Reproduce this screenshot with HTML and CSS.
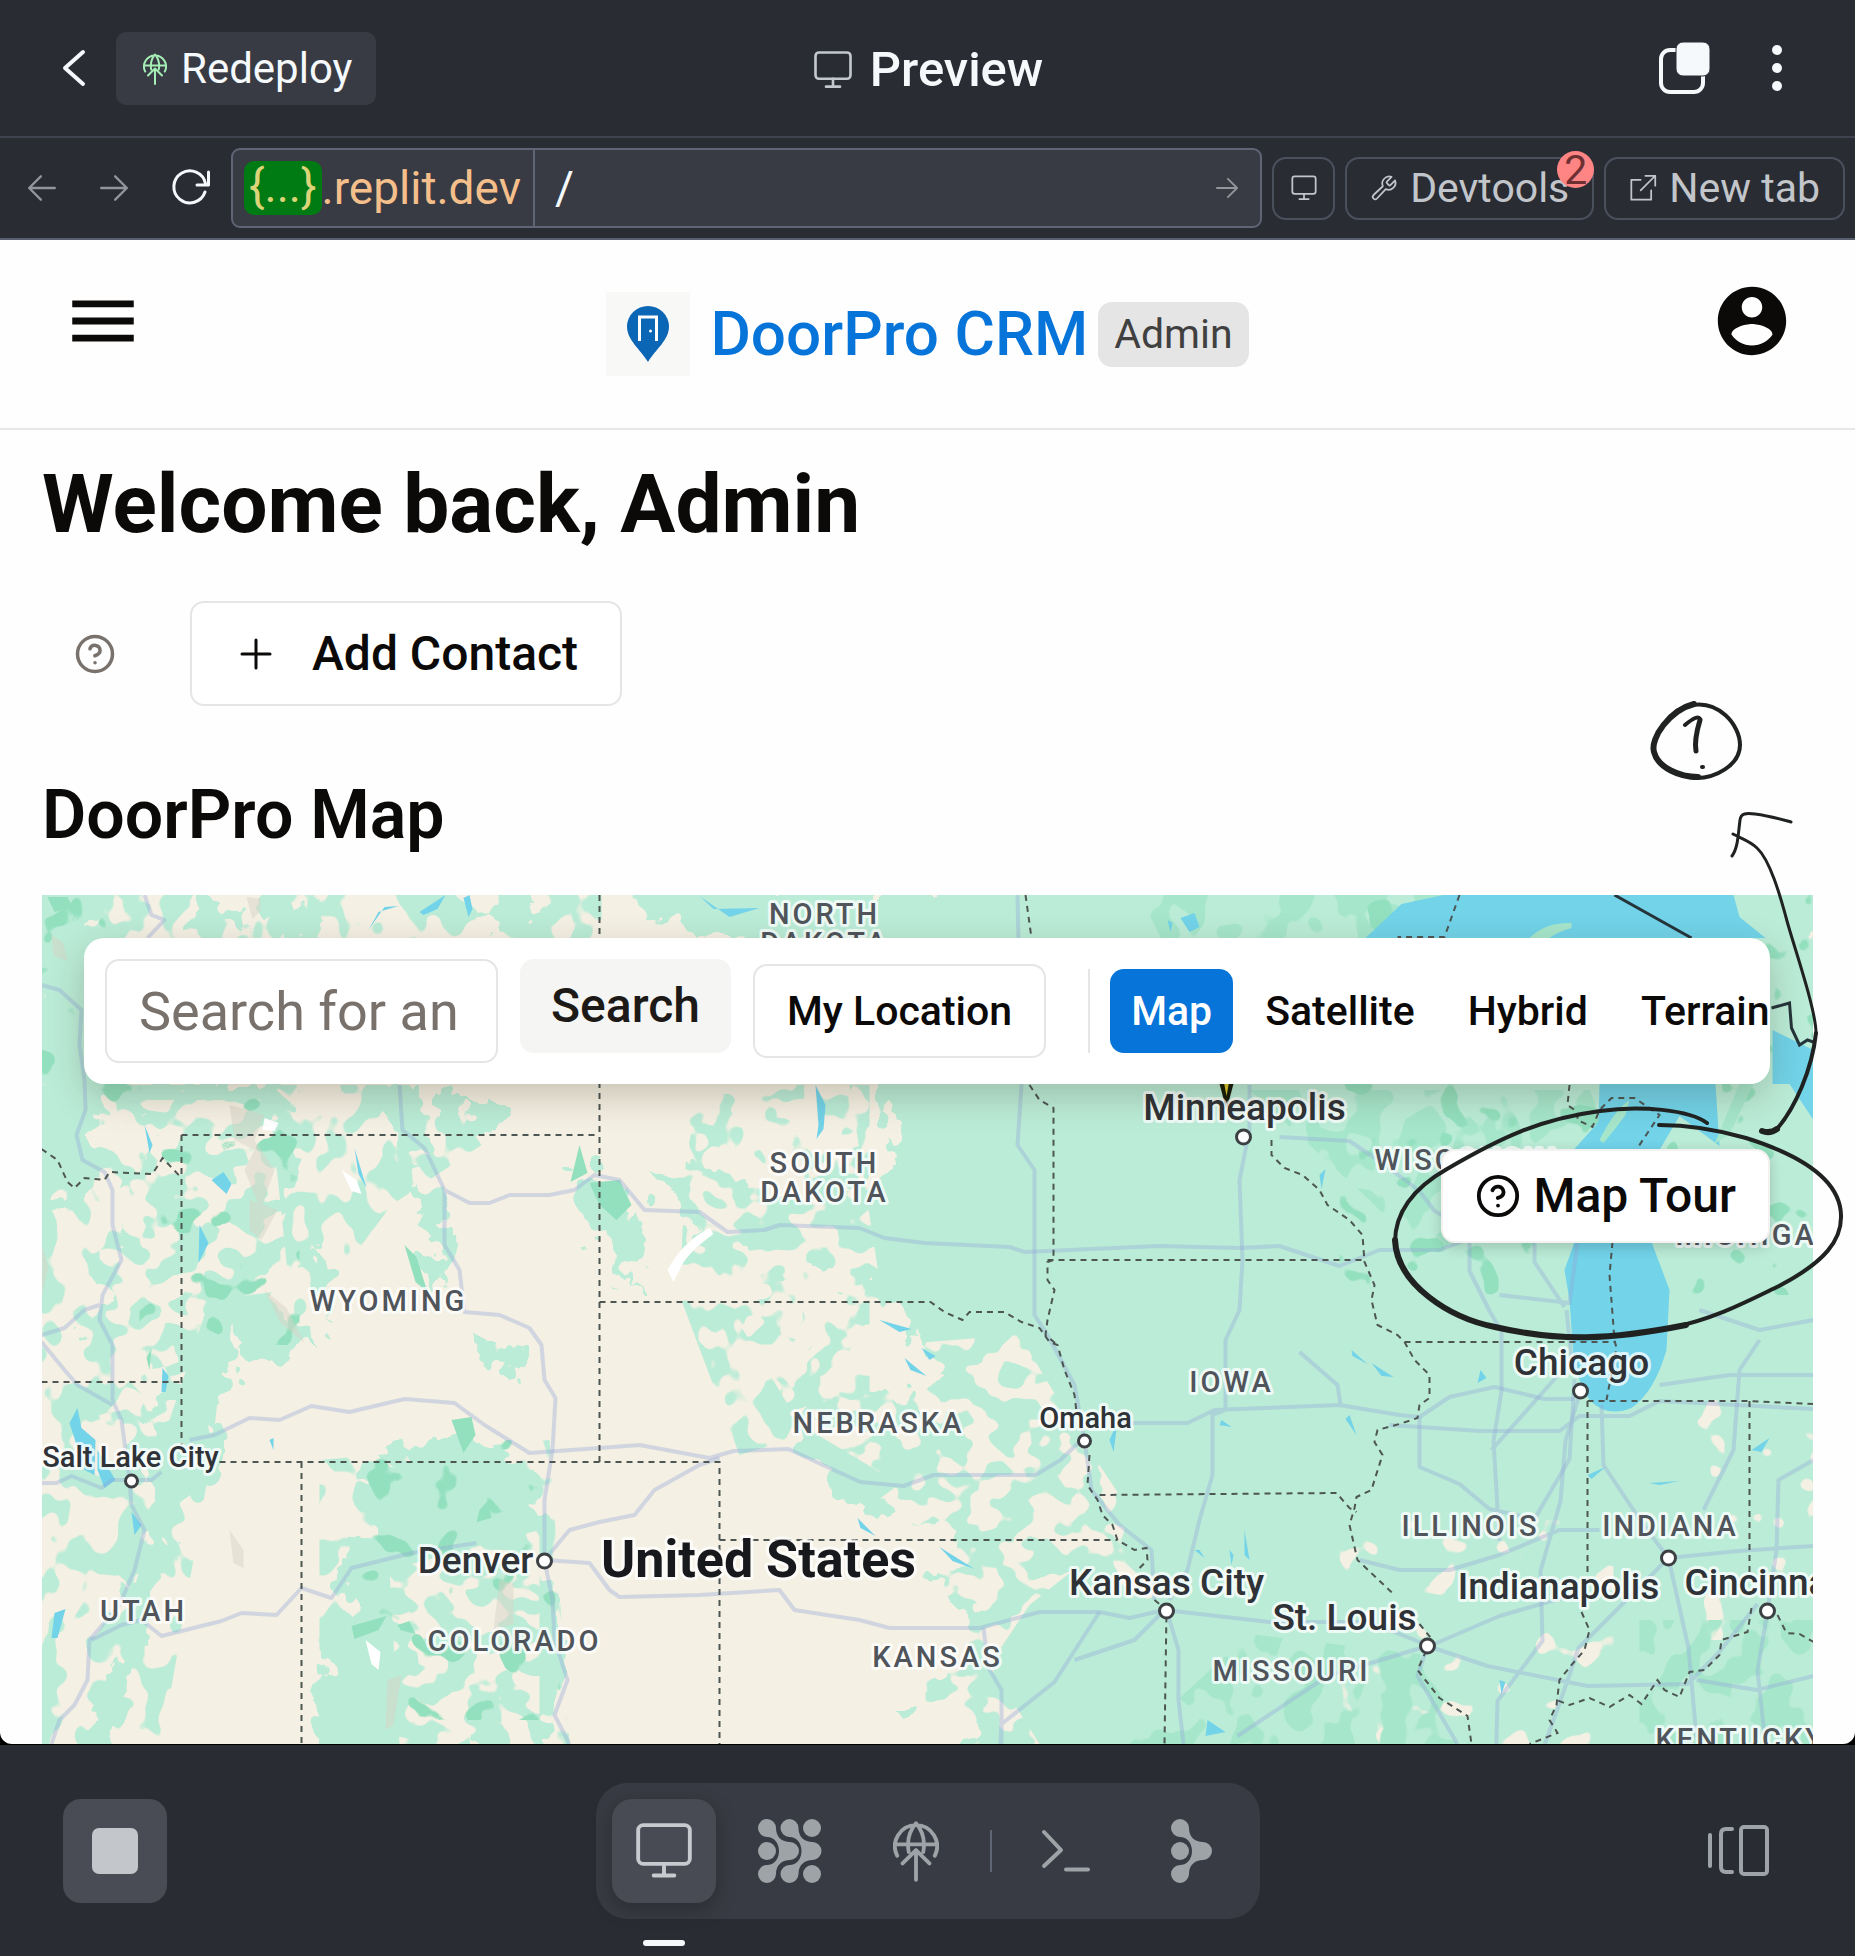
FILE: index.html
```html
<!DOCTYPE html>
<html lang="en">
<head>
<meta charset="utf-8">
<meta name="viewport" content="width=device-width, initial-scale=1">
<title>Preview</title>
<link rel="stylesheet" href="styles.css">
</head>
<body>
<svg class="defs" width="0" height="0" aria-hidden="true">
  <symbol id="monitor" viewBox="0 0 24 24"><rect x="2" y="2" width="20" height="15" rx="2"/><path d="M12 17v4M8 21.500h8"/></symbol>
  <symbol id="globe-up" viewBox="0 0 24 32"><path d="M2.200 18.500A11 11 0 1 1 21.800 18.500M1 12.500h22M8.200 16.500C7 10 9 5 12 1.500 15 5 17 10 15.800 16.500M12 31V16M5 22.500l7-7 7 7"/></symbol>
  <symbol id="arrow" viewBox="0 0 24 24"><path d="M1 12h22M13 2l10 10-10 10"/></symbol>
  <symbol id="help" viewBox="0 0 24 24"><circle cx="12" cy="12" r="10"/><path d="M9.100 9a3 3 0 0 1 5.800 1c0 2-3 3-3 3M12 17h.01"/></symbol>
</svg>

<header class="topbar">
  <div class="topbar-left">
    <button class="plain" aria-label="Back"><svg class="line back" viewBox="0 0 24 36"><path d="M21 2 3 18l18 16"/></svg></button>
    <button class="redeploy"><svg class="line redeploy-icon"><use href="#globe-up"/></svg>Redeploy</button>
  </div>
  <div class="topbar-title"><svg class="line title-icon"><use href="#monitor"/></svg>Preview</div>
  <div class="topbar-right">
    <button class="plain" aria-label="Windows"><svg class="windows" viewBox="0 0 52 54"><rect x="3" y="9" width="42" height="42" rx="9" fill="none" stroke="#f5f9fc" stroke-width="4"/><rect x="18" y="1" width="34" height="34" rx="7" fill="#f5f9fc" stroke="#2a2c34" stroke-width="1"/></svg></button>
    <button class="plain" aria-label="More"><svg class="more" viewBox="0 0 10 48"><circle cx="5" cy="6" r="5"/><circle cx="5" cy="24" r="5"/><circle cx="5" cy="42" r="5"/></svg></button>
  </div>
</header>

<nav class="addressbar" aria-label="Preview navigation">
  <div class="nav-icons">
    <button class="plain dim" aria-label="Go back"><svg class="line nav-arrow flip"><use href="#arrow"/></svg></button>
    <button class="plain dim" aria-label="Go forward"><svg class="line nav-arrow"><use href="#arrow"/></svg></button>
    <button class="plain" aria-label="Reload"><svg class="line reload" viewBox="0 0 38 36"><path d="M33 22A16 16 0 1 1 33.500 13.500M36.500 2v13H25"/></svg></button>
  </div>
  <div class="url">
    <span class="host"><span class="chip">{...}</span>.replit.dev</span>
    <input class="path" type="text" value="/" aria-label="Path">
    <button class="plain dim go" aria-label="Go"><svg class="line go-arrow"><use href="#arrow"/></svg></button>
  </div>
  <button class="outline square" aria-label="Device"><svg class="line tool-icon"><use href="#monitor"/></svg></button>
  <button class="outline"><svg class="line tool-icon" viewBox="0 0 24 24"><path d="M14.500 6.500a1 1 0 0 0 0 1.400l1.600 1.600a1 1 0 0 0 1.400 0l4-4a6 6 0 0 1-8 7.500l-7.500 8a2.100 2.100 0 0 1-3-3l8-7.500a6 6 0 0 1 7.500-8z"/></svg>Devtools<span class="count">2</span></button>
  <a class="outline" href="#new"><svg class="line tool-icon" viewBox="0 0 24 24"><path d="M10 5H2v17h17v-8M14 1.500h8.500V10M22.500 1.500 10 14"/></svg>New tab</a>
</nav>

<div class="frame">
<div class="page">
  <header class="page-head">
    <button class="plain menu" aria-label="Menu"><svg class="head-icon" viewBox="0 0 24 24"><path d="M3 18h18v-2H3v2zm0-5h18v-2H3v2zm0-7v2h18V6H3z"/></svg></button>
    <div class="brand">
      <svg class="logo" viewBox="0 0 84 84"><rect width="84" height="84" fill="#f8f8f7"/><path d="M42 70C34 57 21 48 21 34.500a21 20.500 0 0 1 42 0C63 48 50 57 42 70z" fill="#0b66b5"/><path d="M33.500 49V25h17v24" fill="none" stroke="#fff" stroke-width="3"/><path d="M37 28h10v21H37z" fill="#0b66b5"/><circle cx="44.500" cy="39" r="1.500" fill="#fff"/></svg>
      <span class="brand-name">DoorPro CRM</span>
      <span class="role">Admin</span>
    </div>
    <button class="plain account" aria-label="Account"><svg class="head-icon" viewBox="0 0 24 24"><path d="M12 2C6.480 2 2 6.480 2 12s4.480 10 10 10 10-4.480 10-10S17.520 2 12 2zm0 3c1.660 0 3 1.340 3 3s-1.340 3-3 3-3-1.340-3-3 1.340-3 3-3zm0 14.200c-2.500 0-4.710-1.280-6-3.220.03-1.990 4-3.080 6-3.080 1.990 0 5.970 1.090 6 3.080-1.290 1.940-3.500 3.220-6 3.220z"/></svg></button>
  </header>

  <main class="content">
    <h1>Welcome back, Admin</h1>
    <div class="actions">
      <button class="plain help" aria-label="Help"><svg class="line help-icon"><use href="#help"/></svg></button>
      <button class="card-button add"><svg class="line plus" viewBox="0 0 28 28"><path d="M14 0v28M0 14h28"/></svg>Add Contact</button>
    </div>
    <h2>DoorPro Map</h2>
    <section class="map" aria-label="DoorPro Map">
      <svg class="map-art" viewBox="42 895 1772 849" preserveAspectRatio="xMidYMid slice">
        <defs>
          <filter id="ragged" x="-10%" y="-10%" width="120%" height="120%"><feTurbulence type="fractalNoise" baseFrequency="0.035" numOctaves="3" seed="4"/><feDisplacementMap in="SourceGraphic" scale="64" xChannelSelector="R" yChannelSelector="G"/></filter>
          <filter id="patches" x="0" y="0" width="100%" height="100%"><feTurbulence type="fractalNoise" baseFrequency="0.034 0.026" numOctaves="2" seed="11"/><feColorMatrix values="0 0 0 0 0  0 0 0 0 0  0 0 0 0 0  30 0 0 0 -15.300" result="n"/><feComposite in="SourceGraphic" in2="n" operator="in"/></filter>
          <filter id="clearings" x="0" y="0" width="100%" height="100%"><feTurbulence type="fractalNoise" baseFrequency="0.034 0.040" numOctaves="2" seed="37"/><feColorMatrix values="0 0 0 0 0  0 0 0 0 0  0 0 0 0 0  0 30 0 0 -15" result="n"/><feComposite in="SourceGraphic" in2="n" operator="in"/></filter>
          <filter id="flecks" x="0" y="0" width="100%" height="100%"><feTurbulence type="fractalNoise" baseFrequency="0.030" numOctaves="2" seed="23"/><feColorMatrix values="0 0 0 0 0  0 0 0 0 0  0 0 0 0 0  0 30 0 0 -20" result="n"/><feComposite in="SourceGraphic" in2="n" operator="in"/></filter>
        </defs>
        <rect x="42" y="895" width="1772" height="849" class="land"/>
        <g class="green" filter="url(#ragged)">
          <path d="M30 880h60l10 60 10 150-30 120-50-20zM150 1085h130l20 80-20 60-30 70 70 50-50 20-30-30-20 60-10 80-40 60-10 80-30 60-20 60-20 60H50l60-100 20-100 20-70-10-70 20-80-70-40 20-80 30-60z"/>
          <path d="M620 880h1210v900H980l-20-60-70-10 60-50 20-40-30-40 20-40-90-30-60-40-20-50 60-20 100-10-50-80-60-30-100-30-60-30-40-40 60-10 110 20 90-10-20-80-20-80-60-80-150-20z"/>
          <path d="M400 1450l60-10 40 20 40 20v100l20 60-20 90 20 70h-70l-10-60-60 30 20 50h-50l-60-60-20-80 40-60-20-60 60-30-30-60z"/>
          <path d="M200 900l40 10-10 20-40-5zM260 895l70 20-30 30-40-10zM480 915l40-20 30 30-60 15zM380 1085l40 0 15 80-40-10zM450 1095l50 0 10 30-50 20zM570 1170l35 0 40 60-10 60-30-40zM310 1230l20 40-10 40zM415 1180l30 10 10 80-20 30zM470 1330l50 20 10 30-40-10z"/>
        </g>
        <path class="green" filter="url(#patches)" d="M42 895h560v150H42zM42 1085h400l40 60-90 60-60 80-60 60-50 20-10 90-50 290H42zM320 1460l230-20 20 304H320zM690 1085h180v330l-130 40-60-160z"/>
        <path class="cream" filter="url(#clearings)" d="M640 1085h210l40 260 130-10 60 100 40 60 40 110-80-40-50 40-40 60 50 79H800l20-200 80-60-100-60-60-100zM100 1100h170l20 190-80 10-40 120-70 40zM390 1570l150-40v214H400z"/>
        <path class="cream" filter="url(#flecks)" d="M1340 1520h274v224h-274zM1690 1400h124v240h-124zM1000 900h30v50h-30z"/>
        <path class="deep" filter="url(#patches)" d="M1140 895h330v60h-300zM1250 1090h340l20 50-70 70-110 50-60-60zM1130 1744l120-110 170 20 50 90zM1640 1620h174v124h-174z"/>
        <path class="dark" filter="url(#flecks)" d="M42 895h90v260H42zM140 1085h160v260H140zM360 1440h200v280H360zM1340 895h474v400h-474z"/>
        <g class="dark"><path d="M590 1183l30-3 12 25-15 15-17-15zM452 1420l20-3 4 18-12 18zM150 1370l-3-12 5-10zM405 1245l12 12 11 35-12-10zM580 1145l8 28-17 9zM352 1626l35-10-8 14-24 9zM398 1625l12-4 6 13-15-4zM480 1510l9-10 3 18-15 4zM48 897l20 0 5 10-18 5z"/></g>
        <g class="rock"><path d="M247 897l14 2 0 12-8 8zM52 935l12 8 4 18-14-5zM42 1245l7 22-7 30zM230 1105l35 10-10 25 20 30-14 40-16-40 10-20-20-10zM250 1200l28 10-16 30-12-10zM265 1290l22 18 18 35-24-20zM500 1580l14 4 0 40-20 6zM230 1530l14 20 0 18-10-5zM388 1680l14-5-8 50-8 5z"/></g>
        <g class="snow"><path d="M342 1170l15 10 5 14-10-3zM668 1270q15-28 42-42l4 6q-25 18-32 32l-8 16zM366 1640l15 12-2 18-7-6zM265 1118l14 5-4 8-12-1z"/></g>
        <g class="water">
          <path d="M1366 938l36-34 42-9h290l6 22 26 21zM1600 1084h116l4 62-40-30-20 34h-86l25-28zM1575 1242h77l18 48-3 60q-12 42-35 58-25 10-42-8l-15-30-5-70-5-30zM1773 1030l41 20v70l-24-36h-17z"/>
          <path d="M70 1423l8-15 4 20 14 12-1 35-10-5zM98 1450l18 30-11 8-7-18zM132 1512l10 13-7 10zM55 1613l11-4-8 29h-6zM163 1368l6 8-3 16h-4zM212 1180l12-8 8 12-5 10zM270 1440l4-2 0 12zM420 912l26-17-8 14-14 6zM464 898l6-3 3 14-4 8zM369 930l16-23 14-1-20 6zM700 896l14 13 46-1-30 9zM816 1085l10 20-2 24-7 10 2-14zM880 1320l20 12 12-3zM905 1358l22 18-16-6zM930 1360l-8-12 14 8zM940 1547l35 22-22-8zM858 1518l18 18-15-8zM1181 918l14-5 5 14-10 5zM1168 920l5 3-2 9zM200 1225l9 18-10 20zM145 1125l8 20-3 8zM355 1148l12 40-8-14zM1352 1350l16 14-15-8zM1372 1363l22 14-12-1zM1481 1370l6 8-9 5zM1350 1415l7 20-11-16zM1588 1475l18-8-14 12zM1650 1483l30-2-20 4zM1752 1450l18-12-8 14zM1208 1720l18 12-20 4zM1500 1680l6 2-4 12zM1230 1550l4 5-2 10zM1245 1530l5 30-5-5zM1222 1420l10 7-12-2zM1110 1440l8-18-4 30zM1195 1550l10 8-5-8zM1320 1175l6-6-4 20z"/>
        </g>
        <g class="isle"><path d="M1530 938q16-16 42-15l0 5q-12 3-22 10zM1600 1140q15-30 30-40l-4 15q-10 14-22 28zM1740 1084l14 0-24 50-15 10z"/></g>
        <g class="road">
          <path d="M145 895l7 20 13 5-17 18M42 985l18 5 22 20-2 35 5 35 1 30-9 25 6 25 22 12 8 18v35l9 35-19 35-3 25 13 25v55l9 20 8 60 2 25 13 25-10 40-15 35-30 35-2 40-13 25-15 15-8 24M42 1335l23-7 20-18 15-5M42 1342l23 28 13 15 35 20M42 1483h15l15-7 30 12 10-8h40l10-8"/>
          <path d="M190 1440l25-5 35-17 30 2 32-14 38 6 55-13 50 4 30 22 45 28 70-5 40-3 70 13 24-7 55-2 30 14 42 19 43 4 30-11h102l25-15 23-22"/>
          <path d="M400 1085l3 45 22 18 20 42v55l15 25 5 42 35 3 30 13 12 17 3 35 11 18-3 52-8 50v60l8 40 2 40 13 40-13 35 15 29M445 1190l25 13h20l20-8h40l25-5 20-15 25 5 25 30 55 2 28 20 37-2 15-5 80 3 25 10 40 5 85 4 15 5 45-2 90-4 80 2 40-2 60 20 40-16h60l40-15"/>
          <path d="M545 1560l25-30 30-8 35-7 20-25 45-25 20-7M545 1560l45 3 20 27 10 7 80-2 80-5 15 20 65 10 30 8h90l60-16h60l30 6 35-8 105 12 100 0 60 24 70-30 70-20M92 1640l30-15 20-5 20 16 60-15 20-8 35 2 25-27 30 10 20-30 60-15 65-10"/>
          <path d="M1018 895l4 190-4 60 17 25v145l13 20 27 50 10 55 7 50 28 35 32 25 3 50M1250 1085v45l-10 50 3 80-3 50-14 30v70l-13 5v60l-13 45-12 50-18 30M1120 1423h68l27-13 125-5 60 10 20 2M1300 1352l38 33 3 20M1280 1137l70 4 30 20 40 30 15 20 35 20v40l20 40 12 20v60l-8 50 6 100M1500 1295l70 8 8-60M1492 1450l80-90-5-50M1535 1242v20l30 45M1700 1310l60 20 54-10M1660 1385l70-10h84M1760 1340l-20 30-6 80-30 60M1420 1417v50l40 17 30 25 45 10 35-60 5-80"/>
          <path d="M1420 1417l30-20 45-10 50 12h30M1390 1425l90 6h80l20-15 50 0 30-15 154 8M1602 1405l2 60 40 60 25 33M1581 1391l-15 50-5 60-20 70 2 70-45 60-3 110 20 30 0 0M1360 1560l40 10h50l50-15 60-25h40M1669 1558l-50 50-40 40-10 30-25 70 10 66M1669 1558l70-7 75-5M1669 1558l20 90 8 90M1428 1646l60 20 100 20 100-2 30-30 40-50M1697 1680l60 10 57-14M1428 1646l-100 30-90 60M1428 1646l-10 30 40 68M1165 1610l-30 30-60 20M1100 1612l-45 70-53 42-1 20M984 1628l5 40 13 22v54M1167 1610l12 40v50l5 44M1768 1611l-10 60 8 73M1814 1460l-35 20-2 70-9 61"/>
        </g>
        <g class="border">
          <path d="M600 895v567M182 1135h418M182 1135v310M42 1149l16 11 10 22 7 6 10-10 20 2 5-8 43 2 10-16 19 20M42 1382h140M220 1462h500v282M302 1462v282M600 1302h331l14 10 18 8 7-8h35l17 10 18 6 10 14 8 3 7 25 10 25 2 17M1090 1455l-2 30 10 15 5 15 10 10 5 15 17 10 12-2 1 12-10 10M1155 1600l12 10-2 134M720 1540h398M1026 895l6 43M1030 1085l10 15 14 8v152l-6 2v18l7 10-7 30-2 15 12 10M1048 1260h318M1100 1495l237-2 13 15 7 4"/>
          <path d="M1272 1140v15l13 13 18 7 17 15 8 15 22 15 13 15 2 27 10 23-3 15 6 25 20 10 7 7 10 18 15 15v23l-10 7-2 13-18 6-22 6-3 12 8 13-8 25-3 10-15 7-2 11-5 17 8 35 37 35M1420 1624l13 16-5 8-10 22 22 28 28 18 4 28M1405 1342h210M1613 1242l-3 33 5 65 2 8-10 52M1588 1401h162l64 3M1588 1401v176M1582 1612l8 18-5 20-13 15-12 15-3 25-7 15 8 13-28 11M1750 1401v176M1752 1608l-4 24-26 8-2 15-15 15-15 2-10 25-15-7-7-10-16 24-12-9-20 12-20-9-20 7-13-5M1778 1615l9 18 13 1 14 8M1460 895l-15 42h-47M1570 1085l-2 20 10 7v8l15 7 7-17 12-12h23l25 17-22 33"/>
        </g>
        <path class="solid" d="M1615 895l77 43M1772 1008l18-5 2 25 8 17 8-5 6 2"/>
        <path d="M1219 1080h16l-8 30z" fill="#161a08"/><path d="M1224 1080h6l-3 16z" fill="#d9c92e"/>
        <g class="state">
          <text x="825" y="924">NORTH</text><text x="825" y="953">DAKOTA</text><text x="825" y="1173">SOUTH</text><text x="825" y="1202">DAKOTA</text>
          <text x="389" y="1311">WYOMING</text><text x="879" y="1433">NEBRASKA</text><text x="938" y="1667">KANSAS</text><text x="1232" y="1392">IOWA</text><text x="1292" y="1681">MISSOURI</text><text x="1471" y="1536">ILLINOIS</text><text x="1671" y="1536">INDIANA</text><text x="515" y="1651">COLORADO</text><text x="144" y="1621">UTAH</text>
          <g class="from-left"><text x="1656" y="1749">KENTUCKY</text><text x="1375" y="1170">WISCONSIN</text><text x="1676" y="1245">MICHIGAN</text></g>
        </g>
        <g class="city">
          <text x="1245" y="1120">Minneapolis</text><text x="1167" y="1595">Kansas City</text><text x="1345" y="1630">St. Louis</text><text x="1559" y="1599">Indianapolis</text><text x="1582" y="1375">Chicago</text><text x="476" y="1573">Denver</text><text class="from-left" x="1685" y="1595">Cincinnati</text>
          <g class="small"><text x="131" y="1467">Salt Lake City</text><text x="1086" y="1428">Omaha</text></g>
        </g>
        <text class="country" x="759" y="1577">United States</text>
        <g class="dots"><circle cx="1244" cy="1137" r="7"/><circle cx="1167" cy="1611" r="7"/><circle cx="1428" cy="1646" r="7"/><circle cx="1669" cy="1558" r="7"/><circle cx="1768" cy="1611" r="7"/><circle cx="1581" cy="1391" r="7"/><circle cx="545" cy="1561" r="7"/><circle cx="132" cy="1481" r="6"/><circle cx="1085" cy="1441" r="6"/></g>
      </svg>
      <div class="toolbar">
        <input class="search" type="text" placeholder="Search for an" aria-label="Search for an address">
        <button class="search-go">Search</button>
        <button class="card-button locate">My Location</button>
        <div class="tabs">
          <button class="tab active">Map</button><button class="tab">Satellite</button><button class="tab">Hybrid</button><button class="tab">Terrain</button>
        </div>
      </div>
      <button class="card-button tour"><svg class="line tour-icon"><use href="#help"/></svg>Map Tour</button>
    </section>
  </main>

  <svg class="ink" viewBox="1295 240 560 1160" aria-hidden="true">
    <path stroke-width="4" d="M1707 1123C1690 1110 1640 1105 1600 1111 1540 1119 1500 1138 1447 1169 1410 1190 1394 1215 1395 1245"/>
    <path stroke-width="6" d="M1395 1240C1397 1285 1450 1318 1495 1327 1560 1342 1610 1340 1686 1325"/>
    <path stroke-width="4" d="M1670 1328C1715 1319 1750 1300 1779 1286 1825 1262 1842 1240 1841 1215 1840 1180 1800 1155 1746 1138 1715 1129 1690 1125 1659 1125"/>
    <path stroke-width="6" d="M1762 1131q8 3 15-2"/>
    <path stroke-width="4" d="M1777 1129C1795 1108 1812 1070 1816 1033"/>
    <path stroke-width="3" d="M1816 1033C1816 1010 1795 950 1787 921 1780 895 1770 860 1757 848 1750 841 1742 839 1733 834M1732 856C1738 848 1738 835 1740 820 1741 813 1746 813 1755 814 1770 816 1780 819 1791 822"/>
    <path stroke-width="6" d="M1694 704C1670 710 1650 738 1654 752 1658 768 1680 777 1698 777"/>
    <path stroke-width="4" d="M1688 706C1718 698 1740 725 1740 745 1740 765 1715 779 1694 778M1685 725Q1698 714 1700 719"/>
    <path stroke-width="5" d="M1700 720Q1694 740 1696 751"/><path stroke-width="4" d="M1702 767h1"/>
  </svg>
</div>
</div>

<footer class="bottombar">
  <button class="stop" aria-label="Stop"><span></span></button>
  <div class="dock">
    <button class="dock-item current" aria-label="Preview"><svg class="line dock-monitor"><use href="#monitor"/></svg></button>
    <button class="dock-item" aria-label="Agent"><svg class="blobs" viewBox="0 0 64 64"><circle cx="9" cy="32" r="9"/><circle cx="54" cy="9" r="9"/><circle cx="54" cy="55" r="9"/><path d="M9 0a9 9 0 0 1 9 9c0 9 6 14 14 14a9 9 0 0 1 0 18c-8 0-14 5-14 14a9 9 0 1 1-9-9c7 0 12-6 12-14S16 18 9 18A9 9 0 0 1 9 0z"/><path transform="translate(22.500)" d="M9 0a9 9 0 0 1 9 9c0 9 6 14 14 14a9 9 0 0 1 0 18c-8 0-14 5-14 14a9 9 0 1 1-9-9c7 0 12-6 12-14S16 18 9 18A9 9 0 0 1 9 0z"/></svg></button>
    <button class="dock-item" aria-label="Deployments"><svg class="line dock-globe"><use href="#globe-up"/></svg></button>
    <span class="dock-rule"></span>
    <button class="dock-item" aria-label="Shell"><svg class="line shell" viewBox="0 0 48 42"><path d="M2 2l17 18L2 36M24 39.500h22"/></svg></button>
    <button class="dock-item" aria-label="Workflows"><svg class="flow" viewBox="0 0 41 64"><circle cx="9" cy="32" r="9"/><path d="M9 0a9 9 0 0 1 9 9c0 9 6 14 14 14a9 9 0 0 1 0 18c-8 0-14 5-14 14a9 9 0 1 1-9-9c7 0 12-6 12-14S16 18 9 18A9 9 0 0 1 9 0z"/></svg></button>
  </div>
  <button class="plain panes" aria-label="Panels"><svg class="line panes-icon" viewBox="0 0 62 52"><rect x="33" y="2" width="26" height="47" rx="3"/><path d="M24 4h-6q-5 0-5 5v33q0 5 5 5h6M2 10v31"/></svg></button>
</footer>
</body>
</html>
```
FILE: styles.css
```css
* { box-sizing: border-box; }

body {
  margin: 0;
  min-height: 100vh;
  display: flex;
  flex-direction: column;
  background: #2a2c34;
  color: #f5f9fc;
  font-family: Roboto, "Liberation Sans", sans-serif;
  font-size: 41px;
  line-height: 48px;
}

button, input { font: inherit; color: inherit; margin: 0; }
button { cursor: pointer; border: 0; background: none; padding: 0; display: flex; align-items: center; justify-content: center; white-space: nowrap; }
a { color: inherit; text-decoration: none; }
svg { display: block; flex: none; }
.defs { position: absolute; }
.line { fill: none; stroke: currentColor; stroke-width: 2; stroke-linecap: round; stroke-linejoin: round; overflow: visible; }
.dim { color: #92959b; }

/* Top bar */
.topbar {
  height: 136px;
  padding: 0 62px;
  display: grid;
  grid-template-columns: 1fr auto 1fr;
  align-items: center;
}
.topbar-left { display: flex; align-items: center; gap: 30px; }
.back { width: 24px; height: 36px; stroke-width: 4; }
.redeploy { height: 73px; padding: 2px 24px 0 27px; gap: 14px; border-radius: 10px; background: #383b43; font-size: 42px; }
.redeploy-icon { width: 24px; height: 32px; color: #a5eeb5; }
.topbar-title { display: flex; align-items: center; gap: 16px; padding-top: 3px; font-size: 49px; font-weight: 500; }
.title-icon { width: 42px; height: 42px; color: #c2c8cc; stroke-width: 1.500; }
.topbar-right { display: flex; align-items: center; justify-content: flex-end; gap: 62px; margin-right: 11px; }
.windows { width: 52px; height: 54px; }
.more { width: 10px; height: 48px; fill: #f5f9fc; }

/* Address bar */
.addressbar {
  height: 104px;
  padding: 0 10px 0 28px;
  display: flex;
  align-items: center;
  gap: 10px;
  border-top: 2px solid #3f434f;
  border-bottom: 2px solid #5a5f6f;
}
.nav-icons { display: flex; align-items: center; gap: 44px; margin-right: 11px; }
.nav-arrow { width: 28px; height: 28px; }
.flip { transform: scaleX(-1); }
.reload { width: 38px; height: 36px; stroke-width: 3; }
.url {
  flex: 1;
  min-width: 0;
  height: 80px;
  display: flex;
  align-items: center;
  border: 2px solid #5f6575;
  border-radius: 9px;
  background: #383b43;
}
.host { height: 100%; display: flex; align-items: center; padding: 0 12px 0 11px; border-right: 2px solid #5f6575; color: #f5bf8b; font-size: 46px; }
.chip { height: 54px; line-height: 50px; padding: 0 5px; border-radius: 10px; background: #007a12; color: #dcd479; }
.path { flex: 1; min-width: 0; border: 0; outline: 0; background: none; padding: 0 20px; font-size: 46px; }
.go { padding-right: 22px; }
.go-arrow { width: 22px; height: 22px; }
.outline { position: relative; height: 63px; padding: 0 23px; display: flex; align-items: center; gap: 12px; border: 2px solid #4b505d; border-radius: 14px; color: #c2c6ca; white-space: nowrap; }
.square { width: 63px; padding: 0; }
.tool-icon { width: 28px; height: 28px; stroke-width: 1.500; }
.count { position: absolute; right: -2px; top: -8px; width: 37px; height: 37px; border-radius: 50%; background: #ff8585; color: #6e2f33; line-height: 38px; text-align: center; }

/* Previewed page */
.frame { flex: 1; display: flex; background: #000; padding-bottom: 1px; }
.page { position: relative; flex: 1; min-width: 0; display: flex; flex-direction: column; background: #fefefe; color: #0c0a09; border-radius: 0 0 12px 12px; overflow: hidden; }
.page-head { display: grid; grid-template-columns: 1fr auto 1fr; align-items: start; padding: 40px 62px 52px; border-bottom: 2px solid #e7e7e7; }
.head-icon { width: 82px; height: 82px; fill: #0c0a09; }
.menu { justify-self: start; }
.account { justify-self: end; }
.brand { display: flex; align-items: center; margin-top: 12px; }
.logo { width: 84px; height: 84px; margin-right: 20px; }
.brand-name { font-size: 62px; font-weight: 500; line-height: 84px; color: #0674d9; }
.role { margin-left: 10px; padding: 8px 16px; border-radius: 14px; background: #e5e5e5; color: #404040; line-height: 49px; }

.content { flex: 1; display: flex; flex-direction: column; padding: 26px 42px 0; }
h1 { margin: 0 0 49px; font-size: 82px; line-height: 96px; font-weight: 700; }
h2 { margin: 0 0 40px; font-size: 68px; line-height: 80px; font-weight: 600; }
.actions { display: flex; align-items: center; gap: 42px; margin-bottom: 69px; }
.help { width: 106px; height: 105px; color: #78716c; }
.help-icon { width: 42px; height: 42px; }
.card-button { border: 2px solid #e7e5e4; border-radius: 14px; background: #fff; font-weight: 500; }
.add { height: 105px; padding: 0 42px 0 50px; gap: 42px; font-size: 48px; }
.plus { width: 28px; height: 28px; stroke-width: 3; }

/* Map */
.map { position: relative; flex: 1; min-height: 600px; overflow: hidden; }
.map-art { position: absolute; width: 100%; height: 100%; }
.toolbar {
  position: absolute;
  z-index: 2;
  top: 43px;
  left: 42px;
  right: 43px;
  padding: 21px;
  display: flex;
  align-items: center;
  gap: 22px;
  overflow: hidden;
  border-radius: 20px;
  background: #fff;
}
.map::before { content: ""; position: absolute; z-index: 1; top: 43px; left: 42px; right: 43px; height: 146px; border-radius: 20px; box-shadow: 0 12px 36px rgba(40, 30, 10, .22); }
.search { flex: none; width: 393px; height: 104px; padding: 0 32px; border: 2px solid #e7e5e4; border-radius: 14px; background: #fff; font-size: 54px; }
.search::placeholder { color: #78716c; opacity: 1; }
.search-go { flex: none; align-self: flex-start; height: 94px; padding: 0 31px; border-radius: 14px; background: #f5f5f4; color: #1c1917; font-size: 48px; font-weight: 500; }
.locate { flex: none; height: 94px; padding: 0 32px; }
.tabs { display: flex; gap: 11px; margin-left: 20px; padding-left: 20px; border-left: 2px solid #e7e5e4; }
.tab { height: 84px; padding: 0 21px; border-radius: 14px; font-weight: 500; }
.active { background: #0674d9; color: #fff; }
.tour { position: absolute; z-index: 3; top: 254px; right: 43px; height: 94px; padding: 0 32px; gap: 12px; border-color: #f3f2f1; font-size: 48px; box-shadow: 0 4px 14px rgba(0, 0, 0, .18); }
.tour-icon { width: 46px; height: 46px; }

.land, .cream { fill: #f4f0e3; }
.green { fill: #bbecd7; }
.deep { fill: #a6e6cb; }
.dark { fill: #93e0be; }
.rock { fill: #d8d3c8; opacity: .5; }
.snow { fill: #fff; }
.water { fill: #72d3e9; }
.isle { fill: #a6e6cb; }
.road { fill: none; stroke: #94a7d8; stroke-opacity: .36; stroke-width: 4; stroke-linejoin: round; }
.border { fill: none; stroke: #4d5653; stroke-width: 2; stroke-dasharray: 6 5; }
.solid { fill: none; stroke: #25353a; stroke-width: 3; }
.state, .city, .country { text-anchor: middle; font-weight: 500; stroke: #fff; stroke-opacity: .75; stroke-width: 6px; stroke-linejoin: round; paint-order: stroke; }
.state { fill: #50545b; font-size: 29px; letter-spacing: 3px; }
.city { fill: #2f3237; font-size: 37px; }
.small { font-size: 29px; }
.country { fill: #17191c; font-size: 52px; font-weight: 700; }
.from-left { text-anchor: start; }
.dots { fill: #fff; stroke: #3c4043; stroke-width: 3; }

/* Pen marks over the page */
.ink { position: absolute; z-index: 5; top: 0; right: 0; width: 560px; height: 1160px; fill: none; stroke: #1f2221; stroke-linecap: round; stroke-linejoin: round; pointer-events: none; }

/* Bottom bar */
.bottombar { height: 211px; padding: 38px 63px 0; display: grid; grid-template-columns: 1fr auto 1fr; align-items: start; }
.stop { width: 104px; height: 104px; margin-top: 16px; border-radius: 18px; background: #494c55; }
.stop span { width: 46px; height: 46px; border-radius: 7px; background: #c3c7cb; }
.dock { display: flex; align-items: center; gap: 22px; padding: 16px; border-radius: 32px; background: #383b43; color: #9ea3a7; fill: #9ea3a7; }
.dock-item { position: relative; width: 104px; height: 104px; border-radius: 20px; }
.current { background: #484b54; color: #c7cacf; box-shadow: 0 6px 20px rgba(0, 0, 0, .25); }
.current::after { content: ""; position: absolute; left: 31px; bottom: -43px; width: 42px; height: 6px; border-radius: 3px; background: #f5f9fc; }
.dock-monitor { width: 64px; height: 62px; stroke-width: 1.500; }
.blobs { width: 64px; height: 64px; }
.dock-globe { width: 46px; height: 62px; }
.dock-rule { width: 2px; height: 42px; background: #5f6575; }
.shell { width: 48px; height: 42px; stroke-width: 4; }
.flow { width: 41px; height: 64px; }
.panes { justify-self: end; margin: 42px 22px 0 0; color: #9ea3a7; }
.panes-icon { width: 62px; height: 52px; stroke-width: 4; }
```
